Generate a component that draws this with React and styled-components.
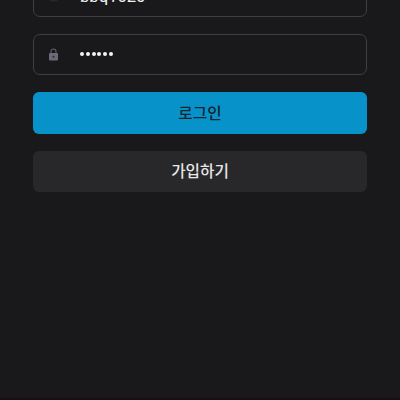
import React from "react";
import styled, { createGlobalStyle } from "styled-components";

const GlobalStyle = createGlobalStyle`
  * { box-sizing: border-box; }
  html, body { margin: 0; background: #19191b; overflow: hidden; }
`;

const Screen = styled.main`
  width: 400px;
  height: 400px;
  overflow: hidden;
  background: #19191b;
  border-bottom: 2px solid #170f14;
  font-family: Roboto, "Noto Sans CJK KR", sans-serif;
`;

const Form = styled.div`
  display: flex;
  flex-direction: column;
  gap: 17px;
  width: 334px;
  margin: -24px 0 0 33px;
`;

const Field = styled.div`
  display: flex;
  align-items: center;
  flex: none;
  height: 41px;
  padding-left: 14px;
  border: 1px solid #3f3e44;
  border-radius: 7px;
`;

const IconSlot = styled.span`
  display: flex;
  width: 11px;
  height: 13px;
  margin-right: 21px;
`;

const Username = styled.span`
  color: #f2f2f3;
  font-size: 16.6px;
  font-weight: 400;
  line-height: 20px;
`;

const Dots = styled.span`
  display: flex;
  gap: 1.8px;
  margin: -1px 0 0 0;
`;

const Dot = styled.i`
  width: 4px;
  height: 4px;
  border-radius: 50%;
  background: #f4f4f5;
`;

const Button = styled.button`
  display: flex;
  align-items: center;
  justify-content: center;
  flex: none;
  height: ${(p) => (p.$primary ? "42px" : "41px")};
  padding: ${(p) => (p.$primary ? "0" : "0 0 1px")};
  border: 0;
  border-radius: 6px;
  background: ${(p) => (p.$primary ? "#0793c9" : "#28282a")};
  color: ${(p) => (p.$primary ? "#14242d" : "#e6e6e7")};
  font-family: "Noto Sans CJK KR", sans-serif;
  font-size: 15.7px;
  font-weight: 500;
  line-height: 22px;
`;

const UserIcon = () => (
  <svg width="11" height="13" viewBox="0 0 11 13">
    <path d="M0 9.5h11Q9 11.5 5.5 11.5T0 9.5Z" fill="#28282c" />
  </svg>
);

const LockIcon = () => (
  <svg width="11" height="13" viewBox="0 0 11 13">
    <path d="M3 6V3.5a2.5 2.5 0 0 1 5 0V6" fill="none" stroke="#62606b" strokeWidth="1.1" />
    <rect x="1" y="5" width="9" height="7.5" rx="1" fill="#6c6a76" />
    <circle cx="5.5" cy="8.7" r="1" fill="#29282d" />
  </svg>
);

export default function App() {
  return (
    <Screen>
      <GlobalStyle />
      <Form>
        <Field>
          <IconSlot><UserIcon /></IconSlot>
          <Username>bbq1020</Username>
        </Field>
        <Field>
          <IconSlot><LockIcon /></IconSlot>
          <Dots>
            {Array.from({ length: 6 }, (_, i) => <Dot key={i} />)}
          </Dots>
        </Field>
        <Button $primary>로그인</Button>
        <Button>가입하기</Button>
      </Form>
    </Screen>
  );
}
